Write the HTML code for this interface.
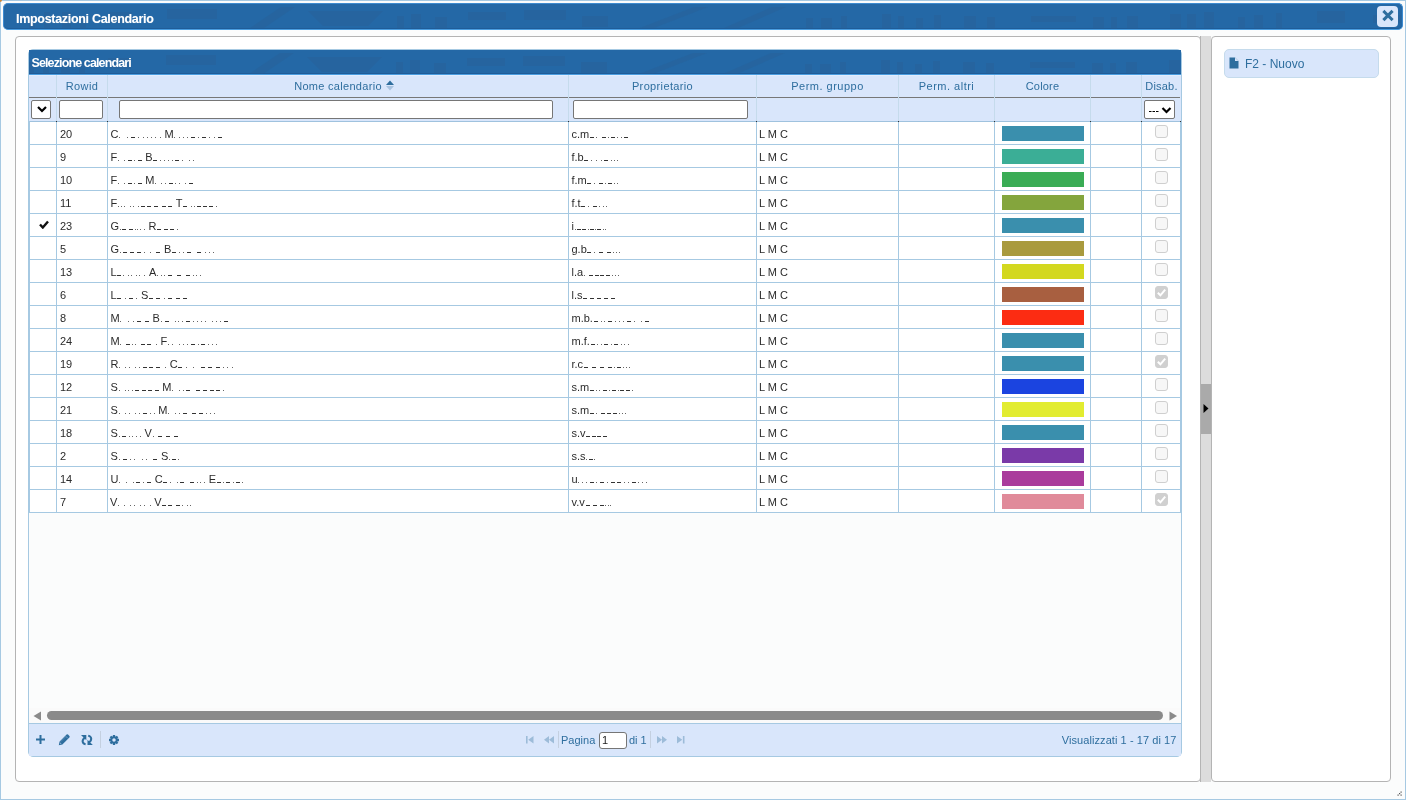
<!DOCTYPE html><html><head><meta charset="utf-8"><style>
*{box-sizing:border-box;margin:0;padding:0}
html,body{width:1406px;height:800px;overflow:hidden;background:#fbfcfc;font-family:"Liberation Sans",sans-serif}
#root{position:absolute;left:0;top:0;width:1406px;height:800px;will-change:transform;-webkit-font-smoothing:antialiased}
.a{position:absolute}
#dlg{left:0;top:0;width:1406px;height:800px;border:1px solid #a6c9e2;background:#fbfcfc}
#title{left:3px;top:3px;width:1400px;height:27px;border-radius:5px;background:#2468a6;border:1px solid #3d8bd0;border-bottom:1px solid #4a9de0;box-shadow:inset 0 -1px 0 #1f5c98}
#title span{position:absolute;left:12px;top:8px;color:#fff;font-weight:bold;font-size:12.5px;letter-spacing:-0.3px;white-space:nowrap;text-shadow:0 0 1px rgba(255,255,255,.4)}
#close{left:1377px;top:6px;width:21px;height:21px;border-radius:4px;background:#d9e6fb}
.panel{border:1px solid #b4b4b4;border-radius:4px;background:#fff}
#split{left:1201px;top:36px;width:10px;height:746px;background:#dcdcdc}
#handle{left:1201px;top:384px;width:10px;height:50px;background:#aaaaaa}
#btn{left:1224px;top:49px;width:155px;height:29px;border:1px solid #c5dbec;border-radius:5px;background:#d9e6fb}
#btn span{position:absolute;left:20px;top:7px;font-size:12px;color:#2e6e9e;white-space:nowrap}
#grid{left:28px;top:49px;width:1154px;height:708px;border:1px solid #a6c9e2;border-radius:5px;background:#fbfcfc;overflow:hidden}
#cap{left:29px;top:50px;width:1152px;height:25px;background:#2468a6;border-bottom:1px solid #4a9de0;box-shadow:inset 0 -1px 0 #1f5c98}
#cap span{position:absolute;left:2.5px;top:6px;color:#fff;font-weight:bold;font-size:12.5px;letter-spacing:-0.88px;white-space:nowrap}
#hdr{left:29px;top:75px;width:1152px;height:46px;border-top:1px solid #e3edfd;background:#d9e6fb}
.hl{position:absolute;height:1px;background:#777}
.vl{position:absolute;width:1px;background:#c5dbec}
.ht{position:absolute;top:80px;font-size:11px;color:#2e6e9e;white-space:nowrap;text-align:center}
.inp{position:absolute;border:1px solid #767676;border-radius:2px;background:#fff}
#rows{left:29px;top:121px;width:1152px;height:392px;background:#fff}
.rl{position:absolute;height:1px;background:#a6c9e2}
.rv{position:absolute;width:1px;background:#a6c9e2}
.ct{position:absolute;font-size:11px;color:#2b2b2b;white-space:nowrap;line-height:13px}
.mk{position:absolute;height:1px}
.sw{position:absolute;width:82px;height:15px}
.cb{position:absolute;width:13px;height:13px;border:1px solid #cfcfcf;border-radius:3px;background:#f7f7f7}
i.d{display:inline-block;width:1px;height:1px;background:#555;margin:0 1px;vertical-align:baseline}
i.u{display:inline-block;width:4px;height:1px;background:#333;margin:0 1px 0 0;vertical-align:baseline}
i.s{display:inline-block;width:3px;height:1px}
#pager{left:29px;top:723px;width:1152px;height:33px;background:#d9e6fb;border-top:1px solid #a6c9e2}
.pt{position:absolute;margin-top:1px;font-size:11px;color:#2e6e9e;white-space:nowrap}
.sep{position:absolute;width:1px;height:17px;background:#c4d0e0}
</style></head><body><div id="root">
<div id="dlg" class="a"></div>
<div id="title" class="a" style="overflow:hidden"><svg width="1400" height="27" style="position:absolute;left:0;top:0"><g transform="translate(-3,0)" fill="#2a5d92" fill-opacity="0.33"><rect x="-20" y="13" width="9" height="16"/><rect x="-5" y="14" width="6" height="16"/><rect x="28" y="12" width="6" height="16"/><rect x="43" y="8" width="6" height="16"/><rect x="61" y="8" width="9" height="16"/><rect x="79" y="12" width="6" height="16"/><rect x="108" y="8" width="23" height="11"/><rect x="166" y="5" width="50" height="10"/><path d="M249 24 L280 3 H294 L263 24 Z"/><path d="M307 7 H382 L367 22 H322 Z"/><rect x="396" y="12" width="7" height="16"/><rect x="410" y="10" width="10" height="16"/><rect x="434" y="13" width="12" height="16"/><rect x="467" y="8" width="38" height="8"/><rect x="523" y="6" width="42" height="10"/><rect x="581" y="12" width="26" height="11"/><path d="M639 24 L693 3 H707 L653 24 Z"/><path d="M723 24 L771 3 H785 L737 24 Z"/><rect x="805" y="14" width="7" height="16"/><rect x="820" y="14" width="11" height="16"/><rect x="840" y="12" width="6" height="16"/><rect x="881" y="10" width="9" height="16"/><rect x="897" y="12" width="6" height="16"/><rect x="915" y="14" width="7" height="16"/><rect x="933" y="11" width="7" height="16"/><rect x="963" y="12" width="12" height="16"/><rect x="986" y="13" width="8" height="16"/><rect x="1030" y="12" width="45" height="6"/><rect x="1092" y="13" width="11" height="16"/><rect x="1110" y="13" width="6" height="16"/><rect x="1126" y="12" width="11" height="16"/><rect x="1169" y="10" width="11" height="16"/><rect x="1186" y="10" width="9" height="16"/><rect x="1203" y="8" width="10" height="16"/><rect x="1237" y="13" width="7" height="16"/><rect x="1253" y="11" width="9" height="16"/><rect x="1275" y="9" width="6" height="16"/><rect x="1316" y="7" width="28" height="12"/><rect x="1372" y="11" width="28" height="8"/></g></svg><span>Impostazioni Calendario</span></div>
<div id="close" class="a"><svg width="21" height="21" viewBox="0 0 21 21" style="position:absolute;left:0;top:0"><path d="M7.5 6 L14.5 13 M14.5 6 L7.5 13" stroke="#2e6e9e" stroke-width="3.1" stroke-linecap="square"/></svg></div>
<div class="a panel" style="left:15px;top:36px;width:1186px;height:746px"></div>
<div id="split" class="a"></div>
<div class="a" style="left:1200px;top:36px;width:1px;height:746px;background:#b4b4b4"></div>
<div id="handle" class="a"><svg width="10" height="50" style="position:absolute;left:0;top:0"><path d="M2.5 20 L7.5 24.5 L2.5 29 Z" fill="#000"/></svg></div>
<div class="a panel" style="left:1211px;top:36px;width:180px;height:746px"></div>
<div id="btn" class="a"><svg width="11" height="12" style="position:absolute;left:4px;top:7px"><path d="M0.5 0.5 H6 L9.5 4 V11.5 H0.5 Z" fill="#2e6e9e"/><path d="M6 0.5 V4 H9.5" fill="#d9e6fb" stroke="#2e6e9e" stroke-width="0"/></svg><span>F2 - Nuovo</span></div>
<div id="grid" class="a"></div>
<div id="cap" class="a" style="overflow:hidden"><svg width="1152" height="25" style="position:absolute;left:0;top:0"><g transform="translate(-29,0)" fill="#2a5d92" fill-opacity="0.33"><rect x="-20" y="13" width="9" height="16"/><rect x="-5" y="14" width="6" height="16"/><rect x="28" y="12" width="6" height="16"/><rect x="43" y="8" width="6" height="16"/><rect x="61" y="8" width="9" height="16"/><rect x="79" y="12" width="6" height="16"/><rect x="108" y="8" width="23" height="11"/><rect x="166" y="5" width="50" height="10"/><path d="M249 24 L280 3 H294 L263 24 Z"/><path d="M307 7 H382 L367 22 H322 Z"/><rect x="396" y="12" width="7" height="16"/><rect x="410" y="10" width="10" height="16"/><rect x="434" y="13" width="12" height="16"/><rect x="467" y="8" width="38" height="8"/><rect x="523" y="6" width="42" height="10"/><rect x="581" y="12" width="26" height="11"/><path d="M639 24 L693 3 H707 L653 24 Z"/><path d="M723 24 L771 3 H785 L737 24 Z"/><rect x="805" y="14" width="7" height="16"/><rect x="820" y="14" width="11" height="16"/><rect x="840" y="12" width="6" height="16"/><rect x="881" y="10" width="9" height="16"/><rect x="897" y="12" width="6" height="16"/><rect x="915" y="14" width="7" height="16"/><rect x="933" y="11" width="7" height="16"/><rect x="963" y="12" width="12" height="16"/><rect x="986" y="13" width="8" height="16"/><rect x="1030" y="12" width="45" height="6"/><rect x="1092" y="13" width="11" height="16"/><rect x="1110" y="13" width="6" height="16"/><rect x="1126" y="12" width="11" height="16"/><rect x="1169" y="10" width="11" height="16"/><rect x="1186" y="10" width="9" height="16"/><rect x="1203" y="8" width="10" height="16"/><rect x="1237" y="13" width="7" height="16"/><rect x="1253" y="11" width="9" height="16"/><rect x="1275" y="9" width="6" height="16"/><rect x="1316" y="7" width="28" height="12"/><rect x="1372" y="11" width="28" height="8"/></g></svg><span>Selezione calendari</span></div>
<div id="hdr" class="a"></div>
<div class="vl" style="left:56px;top:75px;height:46px"></div>
<div class="vl" style="left:107px;top:75px;height:46px"></div>
<div class="vl" style="left:568px;top:75px;height:46px"></div>
<div class="vl" style="left:756px;top:75px;height:46px"></div>
<div class="vl" style="left:898px;top:75px;height:46px"></div>
<div class="vl" style="left:994px;top:75px;height:46px"></div>
<div class="vl" style="left:1090px;top:75px;height:46px"></div>
<div class="vl" style="left:1141px;top:75px;height:46px"></div>
<div class="hl" style="left:29px;top:97px;width:27px"></div>
<div class="hl" style="left:57px;top:97px;width:50px"></div>
<div class="hl" style="left:108px;top:97px;width:460px"></div>
<div class="hl" style="left:569px;top:97px;width:187px"></div>
<div class="hl" style="left:757px;top:97px;width:141px"></div>
<div class="hl" style="left:899px;top:97px;width:95px"></div>
<div class="hl" style="left:995px;top:97px;width:95px"></div>
<div class="hl" style="left:1091px;top:97px;width:50px"></div>
<div class="hl" style="left:1142px;top:97px;width:38px"></div>
<div class="ht" style="left:57px;width:50px;letter-spacing:0.37px">Rowid</div>
<div class="ht" style="left:108px;width:460px;letter-spacing:0.3px">Nome calendario</div><svg class="a" width="14" height="12" style="left:381px;top:80px"><path d="M5 5 L9 0.5 L13 5 Z" fill="#2e6e9e"/><path d="M5 6 L9 10.5 L13 6 Z" fill="#a9c3e0"/></svg>
<div class="ht" style="left:569px;width:187px;letter-spacing:0.36px">Proprietario</div>
<div class="ht" style="left:757px;width:141px;letter-spacing:0.49px">Perm. gruppo</div>
<div class="ht" style="left:899px;width:95px;letter-spacing:0.5px">Perm. altri</div>
<div class="ht" style="left:995px;width:95px;letter-spacing:0.2px">Colore</div>
<div class="ht" style="left:1142px;width:39px;letter-spacing:0.2px">Disab.</div>
<div class="inp" style="left:31px;top:100px;width:20px;height:19px"><svg width="18" height="17" style="position:absolute;left:0;top:0"><path d="M6 6 L10 10 L14 6" stroke="#000" stroke-width="2.2" fill="none"/></svg></div>
<div class="inp" style="left:59px;top:100px;width:44px;height:19px"></div>
<div class="inp" style="left:119px;top:100px;width:434px;height:19px"></div>
<div class="inp" style="left:573px;top:100px;width:175px;height:19px"></div>
<div class="inp" style="left:1144px;top:100px;width:31px;height:19px"><svg width="30" height="17" style="position:absolute;left:0;top:0"><path d="M4 10.5 H6.5 M7.5 10.5 H10 M11 10.5 H13.5" stroke="#000" stroke-width="1" fill="none"/><path d="M17.5 7 L21.5 11 L25.5 7" stroke="#000" stroke-width="2.2" fill="none"/></svg></div>
<div id="rows" class="a"></div>
<div class="rl" style="left:29px;top:121px;width:1152px;background:#9fc2de"></div>
<div class="rl" style="left:29px;top:144px;width:1152px"></div>
<div class="ct" style="left:60px;top:128px">20</div>
<div class="ct" style="left:110.40px;top:128px">C</div>
<div class="mk" style="left:119.14px;top:137px;width:1px;background:#666"></div><div class="mk" style="left:126.71px;top:137px;width:1px;background:#666"></div><div class="mk" style="left:131.00px;top:137px;width:4px;background:#333"></div><div class="mk" style="left:138.28px;top:137px;width:1px;background:#666"></div><div class="mk" style="left:142.56px;top:137px;width:1px;background:#666"></div><div class="mk" style="left:146.85px;top:137px;width:1px;background:#666"></div><div class="mk" style="left:151.13px;top:137px;width:1px;background:#666"></div><div class="mk" style="left:155.42px;top:137px;width:1px;background:#666"></div><div class="mk" style="left:159.70px;top:137px;width:1px;background:#666"></div>
<div class="ct" style="left:164.40px;top:128px">M</div>
<div class="mk" style="left:174.36px;top:137px;width:1px;background:#666"></div><div class="mk" style="left:178.51px;top:137px;width:1px;background:#666"></div><div class="mk" style="left:182.66px;top:137px;width:1px;background:#666"></div><div class="mk" style="left:186.81px;top:137px;width:1px;background:#666"></div><div class="mk" style="left:190.96px;top:137px;width:4px;background:#333"></div><div class="mk" style="left:198.11px;top:137px;width:1px;background:#666"></div><div class="mk" style="left:202.25px;top:137px;width:4px;background:#333"></div><div class="mk" style="left:209.40px;top:137px;width:1px;background:#666"></div><div class="mk" style="left:213.55px;top:137px;width:1px;background:#666"></div><div class="mk" style="left:217.70px;top:137px;width:4px;background:#333"></div>
<div class="ct" style="left:571.5px;top:128px">c.m</div>
<div class="mk" style="left:589.92px;top:137px;width:4px;background:#333"></div><div class="mk" style="left:596.18px;top:137px;width:1px;background:#666"></div><div class="mk" style="left:601.70px;top:137px;width:4px;background:#333"></div><div class="mk" style="left:607.96px;top:137px;width:1px;background:#666"></div><div class="mk" style="left:611.22px;top:137px;width:4px;background:#333"></div><div class="mk" style="left:617.48px;top:137px;width:1px;background:#666"></div><div class="mk" style="left:620.74px;top:137px;width:1px;background:#666"></div><div class="mk" style="left:624.00px;top:137px;width:4px;background:#333"></div>
<div class="ct" style="left:759px;top:128px">L M C</div>
<div class="sw" style="left:1002px;top:126px;background:#3a8fad"></div>
<div class="cb" style="left:1155px;top:125px"></div>
<div class="rl" style="left:29px;top:167px;width:1152px"></div>
<div class="ct" style="left:60px;top:151px">9</div>
<div class="ct" style="left:110.60px;top:151px">F</div>
<div class="mk" style="left:118.12px;top:160px;width:1px;background:#666"></div><div class="mk" style="left:124.11px;top:160px;width:1px;background:#666"></div><div class="mk" style="left:127.61px;top:160px;width:4px;background:#333"></div><div class="mk" style="left:134.10px;top:160px;width:1px;background:#666"></div><div class="mk" style="left:137.60px;top:160px;width:4px;background:#333"></div>
<div class="ct" style="left:145.30px;top:151px">B</div>
<div class="mk" style="left:153.44px;top:160px;width:4px;background:#333"></div><div class="mk" style="left:160.23px;top:160px;width:1px;background:#666"></div><div class="mk" style="left:164.03px;top:160px;width:1px;background:#666"></div><div class="mk" style="left:167.82px;top:160px;width:1px;background:#666"></div><div class="mk" style="left:171.62px;top:160px;width:1px;background:#666"></div><div class="mk" style="left:175.42px;top:160px;width:4px;background:#333"></div><div class="mk" style="left:182.21px;top:160px;width:1px;background:#666"></div><div class="mk" style="left:188.80px;top:160px;width:1px;background:#666"></div><div class="mk" style="left:192.60px;top:160px;width:1px;background:#666"></div>
<div class="ct" style="left:571.5px;top:151px">f.b</div>
<div class="mk" style="left:584.43px;top:160px;width:4px;background:#333"></div><div class="mk" style="left:590.60px;top:160px;width:1px;background:#666"></div><div class="mk" style="left:595.95px;top:160px;width:1px;background:#666"></div><div class="mk" style="left:601.30px;top:160px;width:1px;background:#666"></div><div class="mk" style="left:604.48px;top:160px;width:4px;background:#333"></div><div class="mk" style="left:610.65px;top:160px;width:1px;background:#666"></div><div class="mk" style="left:613.83px;top:160px;width:1px;background:#666"></div><div class="mk" style="left:617.00px;top:160px;width:1px;background:#666"></div>
<div class="ct" style="left:759px;top:151px">L M C</div>
<div class="sw" style="left:1002px;top:149px;background:#3bae96"></div>
<div class="cb" style="left:1155px;top:148px"></div>
<div class="rl" style="left:29px;top:190px;width:1152px"></div>
<div class="ct" style="left:60px;top:174px">10</div>
<div class="ct" style="left:110.60px;top:174px">F</div>
<div class="mk" style="left:118.12px;top:183px;width:1px;background:#666"></div><div class="mk" style="left:124.11px;top:183px;width:1px;background:#666"></div><div class="mk" style="left:127.61px;top:183px;width:4px;background:#333"></div><div class="mk" style="left:134.10px;top:183px;width:1px;background:#666"></div><div class="mk" style="left:137.60px;top:183px;width:4px;background:#333"></div>
<div class="ct" style="left:145.30px;top:174px">M</div>
<div class="mk" style="left:155.26px;top:183px;width:1px;background:#666"></div><div class="mk" style="left:161.43px;top:183px;width:1px;background:#666"></div><div class="mk" style="left:165.01px;top:183px;width:1px;background:#666"></div><div class="mk" style="left:168.59px;top:183px;width:4px;background:#333"></div><div class="mk" style="left:175.17px;top:183px;width:1px;background:#666"></div><div class="mk" style="left:178.75px;top:183px;width:1px;background:#666"></div><div class="mk" style="left:184.92px;top:183px;width:1px;background:#666"></div><div class="mk" style="left:188.50px;top:183px;width:4px;background:#333"></div>
<div class="ct" style="left:571.5px;top:174px">f.m</div>
<div class="mk" style="left:587.48px;top:183px;width:4px;background:#333"></div><div class="mk" style="left:593.55px;top:183px;width:1px;background:#666"></div><div class="mk" style="left:598.70px;top:183px;width:4px;background:#333"></div><div class="mk" style="left:604.78px;top:183px;width:1px;background:#666"></div><div class="mk" style="left:607.85px;top:183px;width:4px;background:#333"></div><div class="mk" style="left:613.93px;top:183px;width:1px;background:#666"></div><div class="mk" style="left:617.00px;top:183px;width:1px;background:#666"></div>
<div class="ct" style="left:759px;top:174px">L M C</div>
<div class="sw" style="left:1002px;top:172px;background:#3aac55"></div>
<div class="cb" style="left:1155px;top:171px"></div>
<div class="rl" style="left:29px;top:213px;width:1152px"></div>
<div class="ct" style="left:60px;top:197px">11</div>
<div class="ct" style="left:110.60px;top:197px">F</div>
<div class="mk" style="left:118.12px;top:206px;width:1px;background:#666"></div><div class="mk" style="left:121.26px;top:206px;width:1px;background:#666"></div><div class="mk" style="left:124.41px;top:206px;width:1px;background:#666"></div><div class="mk" style="left:129.70px;top:206px;width:1px;background:#666"></div><div class="mk" style="left:132.84px;top:206px;width:1px;background:#666"></div><div class="mk" style="left:138.13px;top:206px;width:1px;background:#666"></div><div class="mk" style="left:141.28px;top:206px;width:4px;background:#333"></div><div class="mk" style="left:147.42px;top:206px;width:4px;background:#333"></div><div class="mk" style="left:153.57px;top:206px;width:4px;background:#333"></div><div class="mk" style="left:161.86px;top:206px;width:4px;background:#333"></div><div class="mk" style="left:168.00px;top:206px;width:4px;background:#333"></div>
<div class="ct" style="left:175.70px;top:197px">T</div>
<div class="mk" style="left:183.22px;top:206px;width:4px;background:#333"></div><div class="mk" style="left:191.30px;top:206px;width:1px;background:#666"></div><div class="mk" style="left:194.34px;top:206px;width:1px;background:#666"></div><div class="mk" style="left:197.38px;top:206px;width:4px;background:#333"></div><div class="mk" style="left:203.42px;top:206px;width:4px;background:#333"></div><div class="mk" style="left:209.46px;top:206px;width:4px;background:#333"></div><div class="mk" style="left:215.50px;top:206px;width:1px;background:#666"></div>
<div class="ct" style="left:571.5px;top:197px">f.t</div>
<div class="mk" style="left:581.37px;top:206px;width:4px;background:#333"></div><div class="mk" style="left:587.64px;top:206px;width:1px;background:#666"></div><div class="mk" style="left:593.18px;top:206px;width:4px;background:#333"></div><div class="mk" style="left:599.46px;top:206px;width:1px;background:#666"></div><div class="mk" style="left:602.73px;top:206px;width:1px;background:#666"></div><div class="mk" style="left:606.00px;top:206px;width:1px;background:#666"></div>
<div class="ct" style="left:759px;top:197px">L M C</div>
<div class="sw" style="left:1002px;top:195px;background:#84a53d"></div>
<div class="cb" style="left:1155px;top:194px"></div>
<div class="rl" style="left:29px;top:236px;width:1152px"></div>
<div class="ct" style="left:60px;top:220px">23</div>
<div class="ct" style="left:110.45px;top:220px">G</div>
<div class="mk" style="left:119.81px;top:229px;width:1px;background:#666"></div><div class="mk" style="left:122.29px;top:229px;width:4px;background:#333"></div><div class="mk" style="left:129.27px;top:229px;width:4px;background:#333"></div><div class="mk" style="left:134.75px;top:229px;width:1px;background:#666"></div><div class="mk" style="left:137.24px;top:229px;width:1px;background:#666"></div><div class="mk" style="left:139.73px;top:229px;width:1px;background:#666"></div><div class="mk" style="left:143.70px;top:229px;width:1px;background:#666"></div>
<div class="ct" style="left:148.40px;top:220px">R</div>
<div class="mk" style="left:157.14px;top:229px;width:4px;background:#333"></div><div class="mk" style="left:163.76px;top:229px;width:4px;background:#333"></div><div class="mk" style="left:170.38px;top:229px;width:4px;background:#333"></div><div class="mk" style="left:177.00px;top:229px;width:1px;background:#666"></div>
<div class="ct" style="left:571.5px;top:220px">i</div>
<div class="mk" style="left:574.64px;top:229px;width:1px;background:#666"></div><div class="mk" style="left:576.94px;top:229px;width:4px;background:#333"></div><div class="mk" style="left:582.23px;top:229px;width:4px;background:#333"></div><div class="mk" style="left:587.53px;top:229px;width:1px;background:#666"></div><div class="mk" style="left:589.82px;top:229px;width:4px;background:#333"></div><div class="mk" style="left:595.12px;top:229px;width:1px;background:#666"></div><div class="mk" style="left:597.41px;top:229px;width:4px;background:#333"></div><div class="mk" style="left:602.71px;top:229px;width:1px;background:#666"></div><div class="mk" style="left:605.00px;top:229px;width:1px;background:#666"></div>
<div class="ct" style="left:759px;top:220px">L M C</div>
<div class="sw" style="left:1002px;top:218px;background:#3a8fad"></div>
<div class="cb" style="left:1155px;top:217px"></div>
<svg class="a" width="10" height="9" style="left:39px;top:220px"><path d="M1 4.5 L3.8 7.5 L9 1.5" stroke="#111" stroke-width="2.4" fill="none"/></svg>
<div class="rl" style="left:29px;top:259px;width:1152px"></div>
<div class="ct" style="left:60px;top:243px">5</div>
<div class="ct" style="left:110.45px;top:243px">G</div>
<div class="mk" style="left:119.81px;top:252px;width:1px;background:#666"></div><div class="mk" style="left:123.49px;top:252px;width:4px;background:#333"></div><div class="mk" style="left:130.18px;top:252px;width:4px;background:#333"></div><div class="mk" style="left:136.87px;top:252px;width:4px;background:#333"></div><div class="mk" style="left:143.55px;top:252px;width:1px;background:#666"></div><div class="mk" style="left:149.93px;top:252px;width:1px;background:#666"></div><div class="mk" style="left:156.30px;top:252px;width:4px;background:#333"></div>
<div class="ct" style="left:164.00px;top:243px">B</div>
<div class="mk" style="left:172.14px;top:252px;width:4px;background:#333"></div><div class="mk" style="left:179.21px;top:252px;width:1px;background:#666"></div><div class="mk" style="left:183.28px;top:252px;width:1px;background:#666"></div><div class="mk" style="left:187.35px;top:252px;width:4px;background:#333"></div><div class="mk" style="left:197.49px;top:252px;width:4px;background:#333"></div><div class="mk" style="left:204.56px;top:252px;width:1px;background:#666"></div><div class="mk" style="left:208.63px;top:252px;width:1px;background:#666"></div><div class="mk" style="left:212.70px;top:252px;width:1px;background:#666"></div>
<div class="ct" style="left:571.5px;top:243px">g.b</div>
<div class="mk" style="left:587.49px;top:252px;width:4px;background:#333"></div><div class="mk" style="left:593.56px;top:252px;width:1px;background:#666"></div><div class="mk" style="left:598.68px;top:252px;width:4px;background:#333"></div><div class="mk" style="left:606.81px;top:252px;width:4px;background:#333"></div><div class="mk" style="left:612.87px;top:252px;width:1px;background:#666"></div><div class="mk" style="left:615.94px;top:252px;width:1px;background:#666"></div><div class="mk" style="left:619.00px;top:252px;width:1px;background:#666"></div>
<div class="ct" style="left:759px;top:243px">L M C</div>
<div class="sw" style="left:1002px;top:241px;background:#a99a3e"></div>
<div class="cb" style="left:1155px;top:240px"></div>
<div class="rl" style="left:29px;top:282px;width:1152px"></div>
<div class="ct" style="left:60px;top:266px">13</div>
<div class="ct" style="left:110.45px;top:266px">L</div>
<div class="mk" style="left:117.37px;top:275px;width:4px;background:#333"></div><div class="mk" style="left:123.36px;top:275px;width:1px;background:#666"></div><div class="mk" style="left:128.35px;top:275px;width:1px;background:#666"></div><div class="mk" style="left:131.34px;top:275px;width:1px;background:#666"></div><div class="mk" style="left:136.32px;top:275px;width:1px;background:#666"></div><div class="mk" style="left:139.32px;top:275px;width:1px;background:#666"></div><div class="mk" style="left:144.30px;top:275px;width:1px;background:#666"></div>
<div class="ct" style="left:149.00px;top:266px">A</div>
<div class="mk" style="left:157.14px;top:275px;width:1px;background:#666"></div><div class="mk" style="left:160.72px;top:275px;width:1px;background:#666"></div><div class="mk" style="left:164.31px;top:275px;width:1px;background:#666"></div><div class="mk" style="left:167.90px;top:275px;width:4px;background:#333"></div><div class="mk" style="left:177.07px;top:275px;width:4px;background:#333"></div><div class="mk" style="left:186.24px;top:275px;width:4px;background:#333"></div><div class="mk" style="left:192.83px;top:275px;width:1px;background:#666"></div><div class="mk" style="left:196.41px;top:275px;width:1px;background:#666"></div><div class="mk" style="left:200.00px;top:275px;width:1px;background:#666"></div>
<div class="ct" style="left:571.5px;top:266px">l.a</div>
<div class="mk" style="left:583.82px;top:275px;width:1px;background:#666"></div><div class="mk" style="left:588.61px;top:275px;width:4px;background:#333"></div><div class="mk" style="left:594.51px;top:275px;width:4px;background:#333"></div><div class="mk" style="left:600.41px;top:275px;width:4px;background:#333"></div><div class="mk" style="left:606.31px;top:275px;width:4px;background:#333"></div><div class="mk" style="left:612.20px;top:275px;width:1px;background:#666"></div><div class="mk" style="left:615.10px;top:275px;width:1px;background:#666"></div><div class="mk" style="left:618.00px;top:275px;width:1px;background:#666"></div>
<div class="ct" style="left:759px;top:266px">L M C</div>
<div class="sw" style="left:1002px;top:264px;background:#d3d81f"></div>
<div class="cb" style="left:1155px;top:263px"></div>
<div class="rl" style="left:29px;top:305px;width:1152px"></div>
<div class="ct" style="left:60px;top:289px">6</div>
<div class="ct" style="left:110.45px;top:289px">L</div>
<div class="mk" style="left:117.37px;top:298px;width:4px;background:#333"></div><div class="mk" style="left:124.65px;top:298px;width:1px;background:#666"></div><div class="mk" style="left:128.92px;top:298px;width:4px;background:#333"></div><div class="mk" style="left:136.20px;top:298px;width:1px;background:#666"></div>
<div class="ct" style="left:140.90px;top:289px">S</div>
<div class="mk" style="left:149.04px;top:298px;width:4px;background:#333"></div><div class="mk" style="left:156.49px;top:298px;width:4px;background:#333"></div><div class="mk" style="left:163.94px;top:298px;width:1px;background:#666"></div><div class="mk" style="left:168.39px;top:298px;width:4px;background:#333"></div><div class="mk" style="left:175.85px;top:298px;width:4px;background:#333"></div><div class="mk" style="left:183.30px;top:298px;width:4px;background:#333"></div>
<div class="ct" style="left:571.5px;top:289px">l.s</div>
<div class="mk" style="left:583.20px;top:298px;width:4px;background:#333"></div><div class="mk" style="left:590.15px;top:298px;width:4px;background:#333"></div><div class="mk" style="left:597.10px;top:298px;width:4px;background:#333"></div><div class="mk" style="left:604.05px;top:298px;width:4px;background:#333"></div><div class="mk" style="left:611.00px;top:298px;width:4px;background:#333"></div>
<div class="ct" style="left:759px;top:289px">L M C</div>
<div class="sw" style="left:1002px;top:287px;background:#a85f40"></div>
<div class="cb" style="left:1155px;top:286px;background:#d0d0d0;border-color:#d0d0d0"></div>
<svg class="a" width="13" height="13" style="left:1155px;top:286px"><path d="M2.8 6.8 L5.4 9.3 L10.2 3.6" stroke="#fff" stroke-width="2" fill="none"/></svg>
<div class="rl" style="left:29px;top:328px;width:1152px"></div>
<div class="ct" style="left:60px;top:312px">8</div>
<div class="ct" style="left:110.45px;top:312px">M</div>
<div class="mk" style="left:120.41px;top:321px;width:1px;background:#666"></div><div class="mk" style="left:128.37px;top:321px;width:1px;background:#666"></div><div class="mk" style="left:132.85px;top:321px;width:1px;background:#666"></div><div class="mk" style="left:137.32px;top:321px;width:4px;background:#333"></div><div class="mk" style="left:144.80px;top:321px;width:4px;background:#333"></div>
<div class="ct" style="left:152.50px;top:312px">B</div>
<div class="mk" style="left:160.64px;top:321px;width:1px;background:#666"></div><div class="mk" style="left:164.60px;top:321px;width:4px;background:#333"></div><div class="mk" style="left:174.53px;top:321px;width:1px;background:#666"></div><div class="mk" style="left:178.49px;top:321px;width:1px;background:#666"></div><div class="mk" style="left:182.46px;top:321px;width:1px;background:#666"></div><div class="mk" style="left:186.42px;top:321px;width:4px;background:#333"></div><div class="mk" style="left:193.39px;top:321px;width:1px;background:#666"></div><div class="mk" style="left:197.35px;top:321px;width:1px;background:#666"></div><div class="mk" style="left:201.31px;top:321px;width:1px;background:#666"></div><div class="mk" style="left:205.28px;top:321px;width:1px;background:#666"></div><div class="mk" style="left:212.21px;top:321px;width:1px;background:#666"></div><div class="mk" style="left:216.17px;top:321px;width:1px;background:#666"></div><div class="mk" style="left:220.14px;top:321px;width:1px;background:#666"></div><div class="mk" style="left:224.10px;top:321px;width:4px;background:#333"></div>
<div class="ct" style="left:571.5px;top:312px">m.b.</div>
<div class="mk" style="left:593.59px;top:321px;width:4px;background:#333"></div><div class="mk" style="left:600.54px;top:321px;width:1px;background:#666"></div><div class="mk" style="left:604.49px;top:321px;width:1px;background:#666"></div><div class="mk" style="left:608.43px;top:321px;width:4px;background:#333"></div><div class="mk" style="left:615.38px;top:321px;width:1px;background:#666"></div><div class="mk" style="left:619.32px;top:321px;width:1px;background:#666"></div><div class="mk" style="left:623.27px;top:321px;width:1px;background:#666"></div><div class="mk" style="left:627.22px;top:321px;width:4px;background:#333"></div><div class="mk" style="left:634.16px;top:321px;width:1px;background:#666"></div><div class="mk" style="left:641.05px;top:321px;width:1px;background:#666"></div><div class="mk" style="left:645.00px;top:321px;width:4px;background:#333"></div>
<div class="ct" style="left:759px;top:312px">L M C</div>
<div class="sw" style="left:1002px;top:310px;background:#fc2c12"></div>
<div class="cb" style="left:1155px;top:309px"></div>
<div class="rl" style="left:29px;top:351px;width:1152px"></div>
<div class="ct" style="left:60px;top:335px">24</div>
<div class="ct" style="left:110.45px;top:335px">M</div>
<div class="mk" style="left:120.41px;top:344px;width:1px;background:#666"></div><div class="mk" style="left:125.94px;top:344px;width:4px;background:#333"></div><div class="mk" style="left:132.21px;top:344px;width:1px;background:#666"></div><div class="mk" style="left:135.47px;top:344px;width:1px;background:#666"></div><div class="mk" style="left:141.00px;top:344px;width:4px;background:#333"></div><div class="mk" style="left:147.27px;top:344px;width:4px;background:#333"></div><div class="mk" style="left:155.80px;top:344px;width:1px;background:#666"></div>
<div class="ct" style="left:160.50px;top:335px">F</div>
<div class="mk" style="left:168.02px;top:344px;width:1px;background:#666"></div><div class="mk" style="left:171.94px;top:344px;width:1px;background:#666"></div><div class="mk" style="left:178.80px;top:344px;width:1px;background:#666"></div><div class="mk" style="left:182.72px;top:344px;width:1px;background:#666"></div><div class="mk" style="left:186.65px;top:344px;width:1px;background:#666"></div><div class="mk" style="left:190.57px;top:344px;width:4px;background:#333"></div><div class="mk" style="left:197.50px;top:344px;width:1px;background:#666"></div><div class="mk" style="left:201.42px;top:344px;width:4px;background:#333"></div><div class="mk" style="left:208.35px;top:344px;width:1px;background:#666"></div><div class="mk" style="left:212.27px;top:344px;width:1px;background:#666"></div><div class="mk" style="left:216.20px;top:344px;width:1px;background:#666"></div>
<div class="ct" style="left:571.5px;top:335px">m.f.</div>
<div class="mk" style="left:590.53px;top:344px;width:4px;background:#333"></div><div class="mk" style="left:597.09px;top:344px;width:1px;background:#666"></div><div class="mk" style="left:600.65px;top:344px;width:1px;background:#666"></div><div class="mk" style="left:604.21px;top:344px;width:4px;background:#333"></div><div class="mk" style="left:610.77px;top:344px;width:1px;background:#666"></div><div class="mk" style="left:614.32px;top:344px;width:4px;background:#333"></div><div class="mk" style="left:620.88px;top:344px;width:1px;background:#666"></div><div class="mk" style="left:624.44px;top:344px;width:1px;background:#666"></div><div class="mk" style="left:628.00px;top:344px;width:1px;background:#666"></div>
<div class="ct" style="left:759px;top:335px">L M C</div>
<div class="sw" style="left:1002px;top:333px;background:#3a8fad"></div>
<div class="cb" style="left:1155px;top:332px"></div>
<div class="rl" style="left:29px;top:374px;width:1152px"></div>
<div class="ct" style="left:60px;top:358px">19</div>
<div class="ct" style="left:110.45px;top:358px">R</div>
<div class="mk" style="left:119.19px;top:367px;width:1px;background:#666"></div><div class="mk" style="left:125.43px;top:367px;width:1px;background:#666"></div><div class="mk" style="left:129.05px;top:367px;width:1px;background:#666"></div><div class="mk" style="left:135.29px;top:367px;width:1px;background:#666"></div><div class="mk" style="left:138.91px;top:367px;width:1px;background:#666"></div><div class="mk" style="left:142.53px;top:367px;width:4px;background:#333"></div><div class="mk" style="left:149.14px;top:367px;width:4px;background:#333"></div><div class="mk" style="left:155.76px;top:367px;width:4px;background:#333"></div><div class="mk" style="left:165.00px;top:367px;width:1px;background:#666"></div>
<div class="ct" style="left:169.70px;top:358px">C</div>
<div class="mk" style="left:178.44px;top:367px;width:4px;background:#333"></div><div class="mk" style="left:185.77px;top:367px;width:1px;background:#666"></div><div class="mk" style="left:193.42px;top:367px;width:1px;background:#666"></div><div class="mk" style="left:201.07px;top:367px;width:4px;background:#333"></div><div class="mk" style="left:208.40px;top:367px;width:4px;background:#333"></div><div class="mk" style="left:215.72px;top:367px;width:4px;background:#333"></div><div class="mk" style="left:223.05px;top:367px;width:1px;background:#666"></div><div class="mk" style="left:227.37px;top:367px;width:1px;background:#666"></div><div class="mk" style="left:231.70px;top:367px;width:1px;background:#666"></div>
<div class="ct" style="left:571.5px;top:358px">r.c</div>
<div class="mk" style="left:584.42px;top:367px;width:4px;background:#333"></div><div class="mk" style="left:592.34px;top:367px;width:4px;background:#333"></div><div class="mk" style="left:600.27px;top:367px;width:4px;background:#333"></div><div class="mk" style="left:608.19px;top:367px;width:4px;background:#333"></div><div class="mk" style="left:614.15px;top:367px;width:1px;background:#666"></div><div class="mk" style="left:617.11px;top:367px;width:4px;background:#333"></div><div class="mk" style="left:623.08px;top:367px;width:1px;background:#666"></div><div class="mk" style="left:626.04px;top:367px;width:1px;background:#666"></div><div class="mk" style="left:629.00px;top:367px;width:1px;background:#666"></div>
<div class="ct" style="left:759px;top:358px">L M C</div>
<div class="sw" style="left:1002px;top:356px;background:#3a8fad"></div>
<div class="cb" style="left:1155px;top:355px;background:#d0d0d0;border-color:#d0d0d0"></div>
<svg class="a" width="13" height="13" style="left:1155px;top:355px"><path d="M2.8 6.8 L5.4 9.3 L10.2 3.6" stroke="#fff" stroke-width="2" fill="none"/></svg>
<div class="rl" style="left:29px;top:397px;width:1152px"></div>
<div class="ct" style="left:60px;top:381px">12</div>
<div class="ct" style="left:110.45px;top:381px">S</div>
<div class="mk" style="left:118.59px;top:390px;width:1px;background:#666"></div><div class="mk" style="left:124.57px;top:390px;width:1px;background:#666"></div><div class="mk" style="left:128.05px;top:390px;width:1px;background:#666"></div><div class="mk" style="left:131.54px;top:390px;width:1px;background:#666"></div><div class="mk" style="left:135.03px;top:390px;width:4px;background:#333"></div><div class="mk" style="left:141.52px;top:390px;width:4px;background:#333"></div><div class="mk" style="left:148.01px;top:390px;width:4px;background:#333"></div><div class="mk" style="left:154.50px;top:390px;width:4px;background:#333"></div>
<div class="ct" style="left:162.20px;top:381px">M</div>
<div class="mk" style="left:172.16px;top:390px;width:1px;background:#666"></div><div class="mk" style="left:178.75px;top:390px;width:1px;background:#666"></div><div class="mk" style="left:182.54px;top:390px;width:1px;background:#666"></div><div class="mk" style="left:186.34px;top:390px;width:4px;background:#333"></div><div class="mk" style="left:195.93px;top:390px;width:4px;background:#333"></div><div class="mk" style="left:202.72px;top:390px;width:4px;background:#333"></div><div class="mk" style="left:209.51px;top:390px;width:4px;background:#333"></div><div class="mk" style="left:216.31px;top:390px;width:4px;background:#333"></div><div class="mk" style="left:223.10px;top:390px;width:1px;background:#666"></div>
<div class="ct" style="left:571.5px;top:381px">s.m</div>
<div class="mk" style="left:589.92px;top:390px;width:4px;background:#333"></div><div class="mk" style="left:595.73px;top:390px;width:1px;background:#666"></div><div class="mk" style="left:598.54px;top:390px;width:1px;background:#666"></div><div class="mk" style="left:603.15px;top:390px;width:4px;background:#333"></div><div class="mk" style="left:608.96px;top:390px;width:1px;background:#666"></div><div class="mk" style="left:611.77px;top:390px;width:4px;background:#333"></div><div class="mk" style="left:617.58px;top:390px;width:1px;background:#666"></div><div class="mk" style="left:620.38px;top:390px;width:4px;background:#333"></div><div class="mk" style="left:626.19px;top:390px;width:4px;background:#333"></div><div class="mk" style="left:632.00px;top:390px;width:1px;background:#666"></div>
<div class="ct" style="left:759px;top:381px">L M C</div>
<div class="sw" style="left:1002px;top:379px;background:#1b44e0"></div>
<div class="cb" style="left:1155px;top:378px"></div>
<div class="rl" style="left:29px;top:420px;width:1152px"></div>
<div class="ct" style="left:60px;top:404px">21</div>
<div class="ct" style="left:110.45px;top:404px">S</div>
<div class="mk" style="left:118.59px;top:413px;width:1px;background:#666"></div><div class="mk" style="left:125.12px;top:413px;width:1px;background:#666"></div><div class="mk" style="left:128.89px;top:413px;width:1px;background:#666"></div><div class="mk" style="left:135.43px;top:413px;width:1px;background:#666"></div><div class="mk" style="left:139.20px;top:413px;width:1px;background:#666"></div><div class="mk" style="left:142.96px;top:413px;width:4px;background:#333"></div><div class="mk" style="left:149.73px;top:413px;width:1px;background:#666"></div><div class="mk" style="left:153.50px;top:413px;width:1px;background:#666"></div>
<div class="ct" style="left:158.20px;top:404px">M</div>
<div class="mk" style="left:168.16px;top:413px;width:1px;background:#666"></div><div class="mk" style="left:174.91px;top:413px;width:1px;background:#666"></div><div class="mk" style="left:178.78px;top:413px;width:1px;background:#666"></div><div class="mk" style="left:182.66px;top:413px;width:4px;background:#333"></div><div class="mk" style="left:192.41px;top:413px;width:4px;background:#333"></div><div class="mk" style="left:199.28px;top:413px;width:4px;background:#333"></div><div class="mk" style="left:206.15px;top:413px;width:1px;background:#666"></div><div class="mk" style="left:210.03px;top:413px;width:1px;background:#666"></div><div class="mk" style="left:213.90px;top:413px;width:1px;background:#666"></div>
<div class="ct" style="left:571.5px;top:404px">s.m</div>
<div class="mk" style="left:589.92px;top:413px;width:4px;background:#333"></div><div class="mk" style="left:595.93px;top:413px;width:1px;background:#666"></div><div class="mk" style="left:600.95px;top:413px;width:4px;background:#333"></div><div class="mk" style="left:606.96px;top:413px;width:4px;background:#333"></div><div class="mk" style="left:612.97px;top:413px;width:4px;background:#333"></div><div class="mk" style="left:618.98px;top:413px;width:1px;background:#666"></div><div class="mk" style="left:621.99px;top:413px;width:1px;background:#666"></div><div class="mk" style="left:625.00px;top:413px;width:1px;background:#666"></div>
<div class="ct" style="left:759px;top:404px">L M C</div>
<div class="sw" style="left:1002px;top:402px;background:#e2ec30"></div>
<div class="cb" style="left:1155px;top:401px"></div>
<div class="rl" style="left:29px;top:443px;width:1152px"></div>
<div class="ct" style="left:60px;top:427px">18</div>
<div class="ct" style="left:110.45px;top:427px">S</div>
<div class="mk" style="left:118.59px;top:436px;width:1px;background:#666"></div><div class="mk" style="left:122.21px;top:436px;width:4px;background:#333"></div><div class="mk" style="left:128.83px;top:436px;width:1px;background:#666"></div><div class="mk" style="left:132.45px;top:436px;width:1px;background:#666"></div><div class="mk" style="left:136.08px;top:436px;width:1px;background:#666"></div><div class="mk" style="left:139.70px;top:436px;width:1px;background:#666"></div>
<div class="ct" style="left:144.40px;top:427px">V</div>
<div class="mk" style="left:152.54px;top:436px;width:1px;background:#666"></div><div class="mk" style="left:157.52px;top:436px;width:4px;background:#333"></div><div class="mk" style="left:165.51px;top:436px;width:4px;background:#333"></div><div class="mk" style="left:173.50px;top:436px;width:4px;background:#333"></div>
<div class="ct" style="left:571.5px;top:427px">s.v</div>
<div class="mk" style="left:586.26px;top:436px;width:4px;background:#333"></div><div class="mk" style="left:591.84px;top:436px;width:4px;background:#333"></div><div class="mk" style="left:597.42px;top:436px;width:4px;background:#333"></div><div class="mk" style="left:603.00px;top:436px;width:4px;background:#333"></div>
<div class="ct" style="left:759px;top:427px">L M C</div>
<div class="sw" style="left:1002px;top:425px;background:#3a8fad"></div>
<div class="cb" style="left:1155px;top:424px"></div>
<div class="rl" style="left:29px;top:466px;width:1152px"></div>
<div class="ct" style="left:60px;top:450px">2</div>
<div class="ct" style="left:110.45px;top:450px">S</div>
<div class="mk" style="left:118.59px;top:459px;width:1px;background:#666"></div><div class="mk" style="left:122.81px;top:459px;width:4px;background:#333"></div><div class="mk" style="left:130.04px;top:459px;width:1px;background:#666"></div><div class="mk" style="left:134.27px;top:459px;width:1px;background:#666"></div><div class="mk" style="left:141.72px;top:459px;width:1px;background:#666"></div><div class="mk" style="left:145.95px;top:459px;width:1px;background:#666"></div><div class="mk" style="left:153.40px;top:459px;width:4px;background:#333"></div>
<div class="ct" style="left:161.10px;top:450px">S</div>
<div class="mk" style="left:169.24px;top:459px;width:1px;background:#666"></div><div class="mk" style="left:171.92px;top:459px;width:4px;background:#333"></div><div class="mk" style="left:177.60px;top:459px;width:1px;background:#666"></div>
<div class="ct" style="left:571.5px;top:450px">s.s</div>
<div class="mk" style="left:586.26px;top:459px;width:1px;background:#666"></div><div class="mk" style="left:588.63px;top:459px;width:4px;background:#333"></div><div class="mk" style="left:594.00px;top:459px;width:1px;background:#666"></div>
<div class="ct" style="left:759px;top:450px">L M C</div>
<div class="sw" style="left:1002px;top:448px;background:#7a3aa8"></div>
<div class="cb" style="left:1155px;top:447px"></div>
<div class="rl" style="left:29px;top:489px;width:1152px"></div>
<div class="ct" style="left:60px;top:473px">14</div>
<div class="ct" style="left:110.45px;top:473px">U</div>
<div class="mk" style="left:119.19px;top:482px;width:1px;background:#666"></div><div class="mk" style="left:125.85px;top:482px;width:1px;background:#666"></div><div class="mk" style="left:132.51px;top:482px;width:1px;background:#666"></div><div class="mk" style="left:136.34px;top:482px;width:4px;background:#333"></div><div class="mk" style="left:143.17px;top:482px;width:1px;background:#666"></div><div class="mk" style="left:147.00px;top:482px;width:4px;background:#333"></div>
<div class="ct" style="left:154.70px;top:473px">C</div>
<div class="mk" style="left:163.44px;top:482px;width:4px;background:#333"></div><div class="mk" style="left:170.18px;top:482px;width:1px;background:#666"></div><div class="mk" style="left:176.66px;top:482px;width:1px;background:#666"></div><div class="mk" style="left:180.40px;top:482px;width:4px;background:#333"></div><div class="mk" style="left:189.88px;top:482px;width:4px;background:#333"></div><div class="mk" style="left:196.62px;top:482px;width:1px;background:#666"></div><div class="mk" style="left:200.36px;top:482px;width:1px;background:#666"></div><div class="mk" style="left:204.10px;top:482px;width:1px;background:#666"></div>
<div class="ct" style="left:208.80px;top:473px">E</div>
<div class="mk" style="left:216.94px;top:482px;width:4px;background:#333"></div><div class="mk" style="left:223.17px;top:482px;width:1px;background:#666"></div><div class="mk" style="left:226.40px;top:482px;width:4px;background:#333"></div><div class="mk" style="left:232.63px;top:482px;width:1px;background:#666"></div><div class="mk" style="left:235.87px;top:482px;width:4px;background:#333"></div><div class="mk" style="left:242.10px;top:482px;width:1px;background:#666"></div>
<div class="ct" style="left:571.5px;top:473px">u</div>
<div class="mk" style="left:578.32px;top:482px;width:1px;background:#666"></div><div class="mk" style="left:582.08px;top:482px;width:1px;background:#666"></div><div class="mk" style="left:585.84px;top:482px;width:1px;background:#666"></div><div class="mk" style="left:589.61px;top:482px;width:4px;background:#333"></div><div class="mk" style="left:596.37px;top:482px;width:1px;background:#666"></div><div class="mk" style="left:600.13px;top:482px;width:4px;background:#333"></div><div class="mk" style="left:606.90px;top:482px;width:1px;background:#666"></div><div class="mk" style="left:610.66px;top:482px;width:4px;background:#333"></div><div class="mk" style="left:617.42px;top:482px;width:4px;background:#333"></div><div class="mk" style="left:624.18px;top:482px;width:1px;background:#666"></div><div class="mk" style="left:627.95px;top:482px;width:1px;background:#666"></div><div class="mk" style="left:631.71px;top:482px;width:4px;background:#333"></div><div class="mk" style="left:638.47px;top:482px;width:1px;background:#666"></div><div class="mk" style="left:642.24px;top:482px;width:1px;background:#666"></div><div class="mk" style="left:646.00px;top:482px;width:1px;background:#666"></div>
<div class="ct" style="left:759px;top:473px">L M C</div>
<div class="sw" style="left:1002px;top:471px;background:#aa3b9c"></div>
<div class="cb" style="left:1155px;top:470px"></div>
<div class="rl" style="left:29px;top:512px;width:1152px"></div>
<div class="ct" style="left:60px;top:496px">7</div>
<div class="ct" style="left:110.00px;top:496px">V</div>
<div class="mk" style="left:118.14px;top:505px;width:1px;background:#666"></div><div class="mk" style="left:124.23px;top:505px;width:1px;background:#666"></div><div class="mk" style="left:130.32px;top:505px;width:1px;background:#666"></div><div class="mk" style="left:133.87px;top:505px;width:1px;background:#666"></div><div class="mk" style="left:139.96px;top:505px;width:1px;background:#666"></div><div class="mk" style="left:143.51px;top:505px;width:1px;background:#666"></div><div class="mk" style="left:149.60px;top:505px;width:1px;background:#666"></div>
<div class="ct" style="left:154.30px;top:496px">V</div>
<div class="mk" style="left:162.44px;top:505px;width:4px;background:#333"></div><div class="mk" style="left:168.36px;top:505px;width:4px;background:#333"></div><div class="mk" style="left:176.21px;top:505px;width:4px;background:#333"></div><div class="mk" style="left:182.13px;top:505px;width:1px;background:#666"></div><div class="mk" style="left:186.98px;top:505px;width:1px;background:#666"></div><div class="mk" style="left:189.90px;top:505px;width:1px;background:#666"></div>
<div class="ct" style="left:571.5px;top:496px">v.v</div>
<div class="mk" style="left:586.26px;top:505px;width:4px;background:#333"></div><div class="mk" style="left:593.04px;top:505px;width:4px;background:#333"></div><div class="mk" style="left:599.82px;top:505px;width:4px;background:#333"></div><div class="mk" style="left:605.22px;top:505px;width:1px;background:#666"></div><div class="mk" style="left:607.61px;top:505px;width:1px;background:#666"></div><div class="mk" style="left:610.00px;top:505px;width:1px;background:#666"></div>
<div class="ct" style="left:759px;top:496px">L M C</div>
<div class="sw" style="left:1002px;top:494px;background:#e08a9a"></div>
<div class="cb" style="left:1155px;top:493px;background:#d0d0d0;border-color:#d0d0d0"></div>
<svg class="a" width="13" height="13" style="left:1155px;top:493px"><path d="M2.8 6.8 L5.4 9.3 L10.2 3.6" stroke="#fff" stroke-width="2" fill="none"/></svg>
<div class="rv" style="left:56px;top:121px;height:392px"></div>
<div class="rv" style="left:107px;top:121px;height:392px"></div>
<div class="rv" style="left:568px;top:121px;height:392px"></div>
<div class="rv" style="left:756px;top:121px;height:392px"></div>
<div class="rv" style="left:898px;top:121px;height:392px"></div>
<div class="rv" style="left:994px;top:121px;height:392px"></div>
<div class="rv" style="left:1090px;top:121px;height:392px"></div>
<div class="rv" style="left:1141px;top:121px;height:392px"></div>
<div class="rv" style="left:1180px;top:121px;height:392px"></div>
<div class="rv" style="left:29px;top:121px;height:392px"></div>
<div class="a" style="left:56px;top:121px;width:1px;height:1px;background:#333"></div>
<div class="a" style="left:107px;top:121px;width:1px;height:1px;background:#333"></div>
<div class="a" style="left:568px;top:121px;width:1px;height:1px;background:#333"></div>
<div class="a" style="left:756px;top:121px;width:1px;height:1px;background:#333"></div>
<div class="a" style="left:898px;top:121px;width:1px;height:1px;background:#333"></div>
<div class="a" style="left:994px;top:121px;width:1px;height:1px;background:#333"></div>
<div class="a" style="left:1090px;top:121px;width:1px;height:1px;background:#333"></div>
<div class="a" style="left:1141px;top:121px;width:1px;height:1px;background:#333"></div>
<div class="a" style="left:1180px;top:121px;width:1px;height:1px;background:#333"></div>
<div class="a" style="left:29px;top:708px;width:1152px;height:15px;background:#fafafa"></div>
<svg class="a" width="10" height="10" style="left:33px;top:711px"><path d="M0.5 5 L8 0.5 V9.5 Z" fill="#8a8a8a"/></svg>
<div class="a" style="left:47px;top:711px;width:1116px;height:9px;border-radius:5px;background:#8a8a8a"></div>
<svg class="a" width="10" height="10" style="left:1169px;top:711px"><path d="M8 5 L0.5 0.5 V9.5 Z" fill="#8a8a8a"/></svg>
<div id="pager" class="a"></div>
<svg class="a" width="12" height="12" style="left:35px;top:734px"><path d="M5.5 1 V10 M1 5.5 H10" stroke="#2e6e9e" stroke-width="2"/></svg>
<svg class="a" width="14" height="14" style="left:57px;top:733px"><path d="M1.8 12.2 L2.6 8.6 L9.6 1.6 Q10.3 0.9 11 1.6 L12.4 3 Q13.1 3.7 12.4 4.4 L5.4 11.4 Z" fill="#2e6e9e"/><path d="M3.2 10.8 L3.5 9.6 L4.4 10.5 Z" fill="#d9e6fb"/><path d="M8.7 3.2 L10.8 5.3" stroke="#9fbfe0" stroke-width="0.6"/><path d="M3.6 8.8 L8.6 3.8" stroke="#7ea6cf" stroke-width="0.5"/></svg>
<svg class="a" width="14" height="14" style="left:80px;top:733px"><path d="M1 2 H6.3 V7.2 Z" fill="#2e6e9e"/><path d="M5.2 4.6 Q2.6 5.8 2.6 8.3 Q2.8 10.6 5.6 11.4" stroke="#2e6e9e" stroke-width="2" fill="none"/><path d="M12.8 12 H7.5 V6.8 Z" fill="#2e6e9e"/><path d="M8.6 9.4 Q11.2 8.2 11.2 5.7 Q11 3.4 8.2 2.6" stroke="#2e6e9e" stroke-width="2" fill="none"/></svg>
<div class="sep" style="left:100px;top:731px"></div>
<svg class="a" width="12" height="12" style="left:108px;top:734px"><path d="M8.50 7.15 L11.00 7.15 L11.00 4.85 L8.50 4.85 Z M6.95 8.58 L8.72 10.35 L10.35 8.72 L8.58 6.95 Z M4.85 8.50 L4.85 11.00 L7.15 11.00 L7.15 8.50 Z M3.42 6.95 L1.65 8.72 L3.28 10.35 L5.05 8.58 Z M3.50 4.85 L1.00 4.85 L1.00 7.15 L3.50 7.15 Z M5.05 3.42 L3.28 1.65 L1.65 3.28 L3.42 5.05 Z M7.15 3.50 L7.15 1.00 L4.85 1.00 L4.85 3.50 Z M8.58 5.05 L10.35 3.28 L8.72 1.65 L6.95 3.42 Z " fill="#2e6e9e"/><circle cx="6" cy="6" r="2.7" fill="none" stroke="#2e6e9e" stroke-width="1.9"/></svg>
<svg class="a" width="9" height="9" style="left:526px;top:736px"><path d="M0 0 H1.6 V7.5 H0 Z M7.5 0 L2.2 3.75 L7.5 7.5 Z" fill="#9dbcd9"/></svg>
<svg class="a" width="11" height="9" style="left:544px;top:736px"><path d="M5 0 L0 3.75 L5 7.5 Z M10 0 L5 3.75 L10 7.5 Z" fill="#9dbcd9"/></svg>
<div class="sep" style="left:558px;top:731px"></div>
<div class="pt" style="left:561px;top:733px">Pagina</div>
<div class="inp" style="left:599px;top:732px;width:28px;height:17px;border-radius:3px"><span style="position:absolute;left:2px;top:1px;font-size:11px;color:#222">1</span></div>
<div class="pt" style="left:629px;top:733px">di 1</div>
<div class="sep" style="left:650px;top:731px"></div>
<svg class="a" width="11" height="9" style="left:657px;top:736px"><path d="M0 0 L5 3.75 L0 7.5 Z M5 0 L10 3.75 L5 7.5 Z" fill="#9dbcd9"/></svg>
<svg class="a" width="9" height="9" style="left:677px;top:736px"><path d="M5.9 0 H7.5 V7.5 H5.9 Z M0 0 L5.3 3.75 L0 7.5 Z" fill="#9dbcd9"/></svg>
<div class="pt" style="right:229.5px;top:733px;letter-spacing:0.07px">Visualizzati 1 - 17 di 17</div>
<div class="a" style="left:0;top:0;width:2px;height:2px;background:#d0883c;border-radius:0 0 2px 0"></div>
<svg class="a" width="6" height="6" style="left:1397px;top:791px"><rect x="3.5" y="0.5" width="1.2" height="1.2" fill="#555"/><rect x="2" y="2" width="1.2" height="1.2" fill="#555"/><rect x="0.5" y="3.5" width="1.2" height="1.2" fill="#555"/><rect x="3.5" y="3.5" width="1.2" height="1.2" fill="#555"/></svg>
</div></body></html>
